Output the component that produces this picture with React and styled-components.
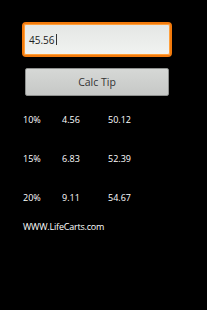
import styled, { createGlobalStyle } from 'styled-components'

const Global = createGlobalStyle`
  html, body {
    margin: 0;
    padding: 0;
    background: #000;
  }
  body {
    width: 207px;
    height: 310px;
    overflow: hidden;
    font-family: "Open Sans", "Liberation Sans", sans-serif;
  }
`

const Screen = styled.div`
  width: 207px;
  height: 310px;
  background: #000;
  padding: 22px 0 0 22px;
  box-sizing: border-box;
`

const Field = styled.div`
  width: 150px;
  height: 35px;
  box-sizing: border-box;
  border: 2px solid #f27a0c;
  border-radius: 4px;
  box-shadow: inset 0 0 0 1px #ff9f3a;
  background: linear-gradient(#e4e6e4, #f1f3f1);
  display: flex;
  align-items: center;
  padding-left: 5px;
  font-size: 10px;
  color: #222;
`

const Caret = styled.span`
  display: inline-block;
  width: 1px;
  height: 11px;
  background: #333;
  margin-left: 1px;
`

const Button = styled.div`
  margin: 11px 0 0 3px;
  width: 144px;
  height: 28px;
  box-sizing: border-box;
  border: 1px solid #8f918f;
  border-radius: 2px;
  background: linear-gradient(#d6d8d6, #c6c8c6);
  display: flex;
  align-items: center;
  justify-content: center;
  font-size: 10.5px;
  color: #333;
`

const Table = styled.div`
  margin-top: 4px;
  display: flex;
  flex-direction: column;
`

const Row = styled.div`
  height: 39px;
  display: grid;
  grid-template-columns: 39px 46px auto;
  align-items: center;
  font-size: 9px;
  color: #fff;
  padding-left: 1px;
`

const Link = styled.div`
  height: 18px;
  display: flex;
  align-items: center;
  font-size: 9px;
  letter-spacing: -0.2px;
  color: #fff;
  padding-left: 1px;
`

const rows = [
  ['10%', '4.56', '50.12'],
  ['15%', '6.83', '52.39'],
  ['20%', '9.11', '54.67']
]

const App = () => (
  <Screen>
    <Global />
    <Field>
      45.56<Caret />
    </Field>
    <Button>Calc Tip</Button>
    <Table>
      {rows.map(r => (
        <Row key={r[0]}>
          <span>{r[0]}</span>
          <span>{r[1]}</span>
          <span>{r[2]}</span>
        </Row>
      ))}
      <Link>WWW.LifeCarts.com</Link>
    </Table>
  </Screen>
)

export default App
